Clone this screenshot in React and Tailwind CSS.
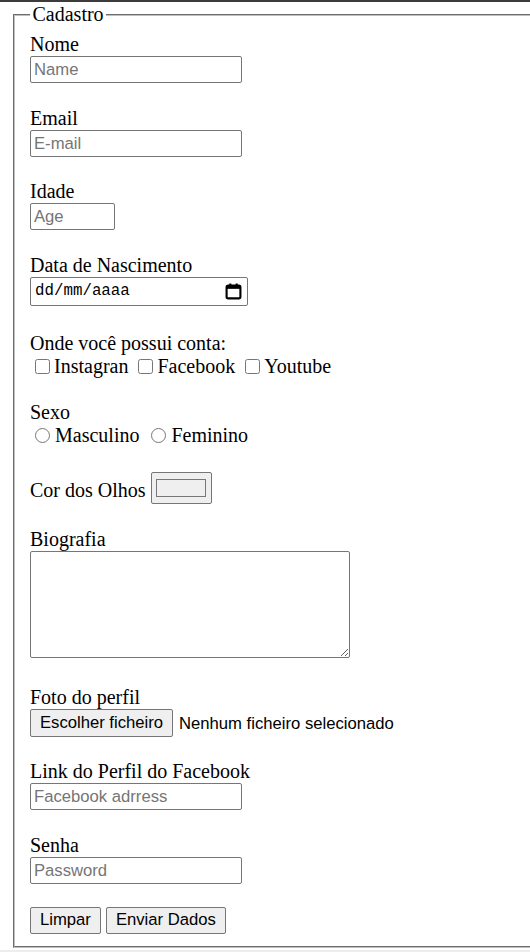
export default function App() {
  const inputCls =
    "block w-[212px] h-[27px] border border-[#767676] rounded-[2px] bg-white px-[3px] font-['Liberation_Sans',Arial,sans-serif] text-[16.67px] text-black placeholder:text-[#757575] outline-none";
  const btnCls =
    "h-[27px] border border-[#767676] rounded-[2px] bg-[#efefef] px-[9px] font-['Liberation_Sans',Arial,sans-serif] text-[16.67px] text-black leading-none";

  return (
    <div className="min-h-[952px] overflow-hidden bg-white font-['Liberation_Serif','Times_New_Roman',serif] text-[20px] leading-[23px] text-black">
      <div className="h-[2px] bg-[#3c3c3c]" />

      <form onSubmit={(e) => e.preventDefault()}>
        <fieldset className="mt-[1px] ml-[13px] w-[580px] border-2 border-[#c0c0c0] [border-style:groove] px-[15px] pt-[7px] pb-[12px]">
          <legend className="px-[2.5px] leading-[23px]">Cadastro</legend>

          {/* Nome */}
          <div>
            <div>Nome</div>
            <input type="text" placeholder="Name" className={inputCls} />
          </div>

          {/* Email */}
          <div className="mt-[24px]">
            <div>Email</div>
            <input type="email" placeholder="E-mail" className={inputCls} />
          </div>

          {/* Idade */}
          <div className="mt-[23px]">
            <div>Idade</div>
            <input
              type="text"
              placeholder="Age"
              className="block w-[85px] h-[27px] border border-[#767676] rounded-[2px] bg-white px-[3px] font-['Liberation_Sans',Arial,sans-serif] text-[16.67px] text-black placeholder:text-[#757575] outline-none"
            />
          </div>

          {/* Data de Nascimento */}
          <div className="mt-[24px]">
            <div>Data de Nascimento</div>
            <div className="flex w-[218px] h-[29px] items-center justify-between border border-[#767676] rounded-[2px] bg-white pl-[4px] pr-[5px]">
              <span className="font-['Liberation_Mono','DejaVu_Sans_Mono',monospace] text-[15.8px] leading-none">
                dd/mm/aaaa
              </span>
              <svg width="17" height="17" viewBox="0 0 16 16" fill="none">
                <rect x="1.5" y="2.5" width="13" height="12" rx="1.5" stroke="#000" strokeWidth="2" />
                <rect x="1.5" y="2.5" width="13" height="3" fill="#000" />
                <rect x="4" y="0.5" width="2" height="3" fill="#000" />
                <rect x="10" y="0.5" width="2" height="3" fill="#000" />
              </svg>
            </div>
          </div>

          {/* Contas */}
          <div className="mt-[26px]">
            <div>Onde você possui conta:</div>
            <div className="flex items-center h-[23px]">
              <input type="checkbox" className="w-[15px] h-[15px] ml-[5px] mr-[4px]" />
              <span>Instagran</span>
              <input type="checkbox" className="w-[15px] h-[15px] ml-[10px] mr-[4px]" />
              <span>Facebook</span>
              <input type="checkbox" className="w-[15px] h-[15px] ml-[10px] mr-[4px]" />
              <span>Youtube</span>
            </div>
          </div>

          {/* Sexo */}
          <div className="mt-[23px]">
            <div>Sexo</div>
            <div className="flex items-center h-[23px]">
              <input type="radio" name="sexo" className="w-[15px] h-[15px] ml-[5px] mr-[5px]" />
              <span>Masculino</span>
              <input type="radio" name="sexo" className="w-[15px] h-[15px] ml-[12px] mr-[5px]" />
              <span>Feminino</span>
            </div>
          </div>

          {/* Cor dos Olhos */}
          <div className="mt-[25px] flex items-end h-[32px]">
            <span className="mb-[2px] mr-[5px]">Cor dos Olhos</span>
            <div className="flex w-[61px] h-[32px] items-center justify-center border border-[#767676] rounded-[2px] bg-[#efefef]">
              <div className="w-[50px] h-[18px] border border-[#777] bg-[#efefef]" />
            </div>
          </div>

          {/* Biografia */}
          <div className="mt-[24px]">
            <div>Biografia</div>
            <textarea className="block w-[320px] h-[107px] border border-[#767676] rounded-[2px] bg-white resize outline-none" />
          </div>

          {/* Foto do perfil */}
          <div className="mt-[28px]">
            <div>Foto do perfil</div>
            <div className="flex items-center h-[28px] font-['Liberation_Sans',Arial,sans-serif] text-[16.67px]">
              <button type="button" className="h-[28px] w-[143px] border border-[#767676] rounded-[2px] bg-[#efefef] font-['Liberation_Sans',Arial,sans-serif] text-[16.67px] text-black leading-none">
                Escolher ficheiro
              </button>
              <span className="ml-[6px]">Nenhum ficheiro selecionado</span>
            </div>
          </div>

          {/* Facebook */}
          <div className="mt-[23px]">
            <div>Link do Perfil do Facebook</div>
            <input type="url" placeholder="Facebook adrress" className={inputCls} />
          </div>

          {/* Senha */}
          <div className="mt-[24px]">
            <div>Senha</div>
            <input type="password" placeholder="Password" className={inputCls} />
          </div>

          {/* Botões */}
          <div className="mt-[23px] flex gap-[5px]">
            <button type="reset" className={btnCls}>
              Limpar
            </button>
            <button type="submit" className={btnCls}>
              Enviar Dados
            </button>
          </div>
        </fieldset>
      </form>

      <div className="mt-[2px] h-[2px] bg-[#ededed]" />
    </div>
  );
}
